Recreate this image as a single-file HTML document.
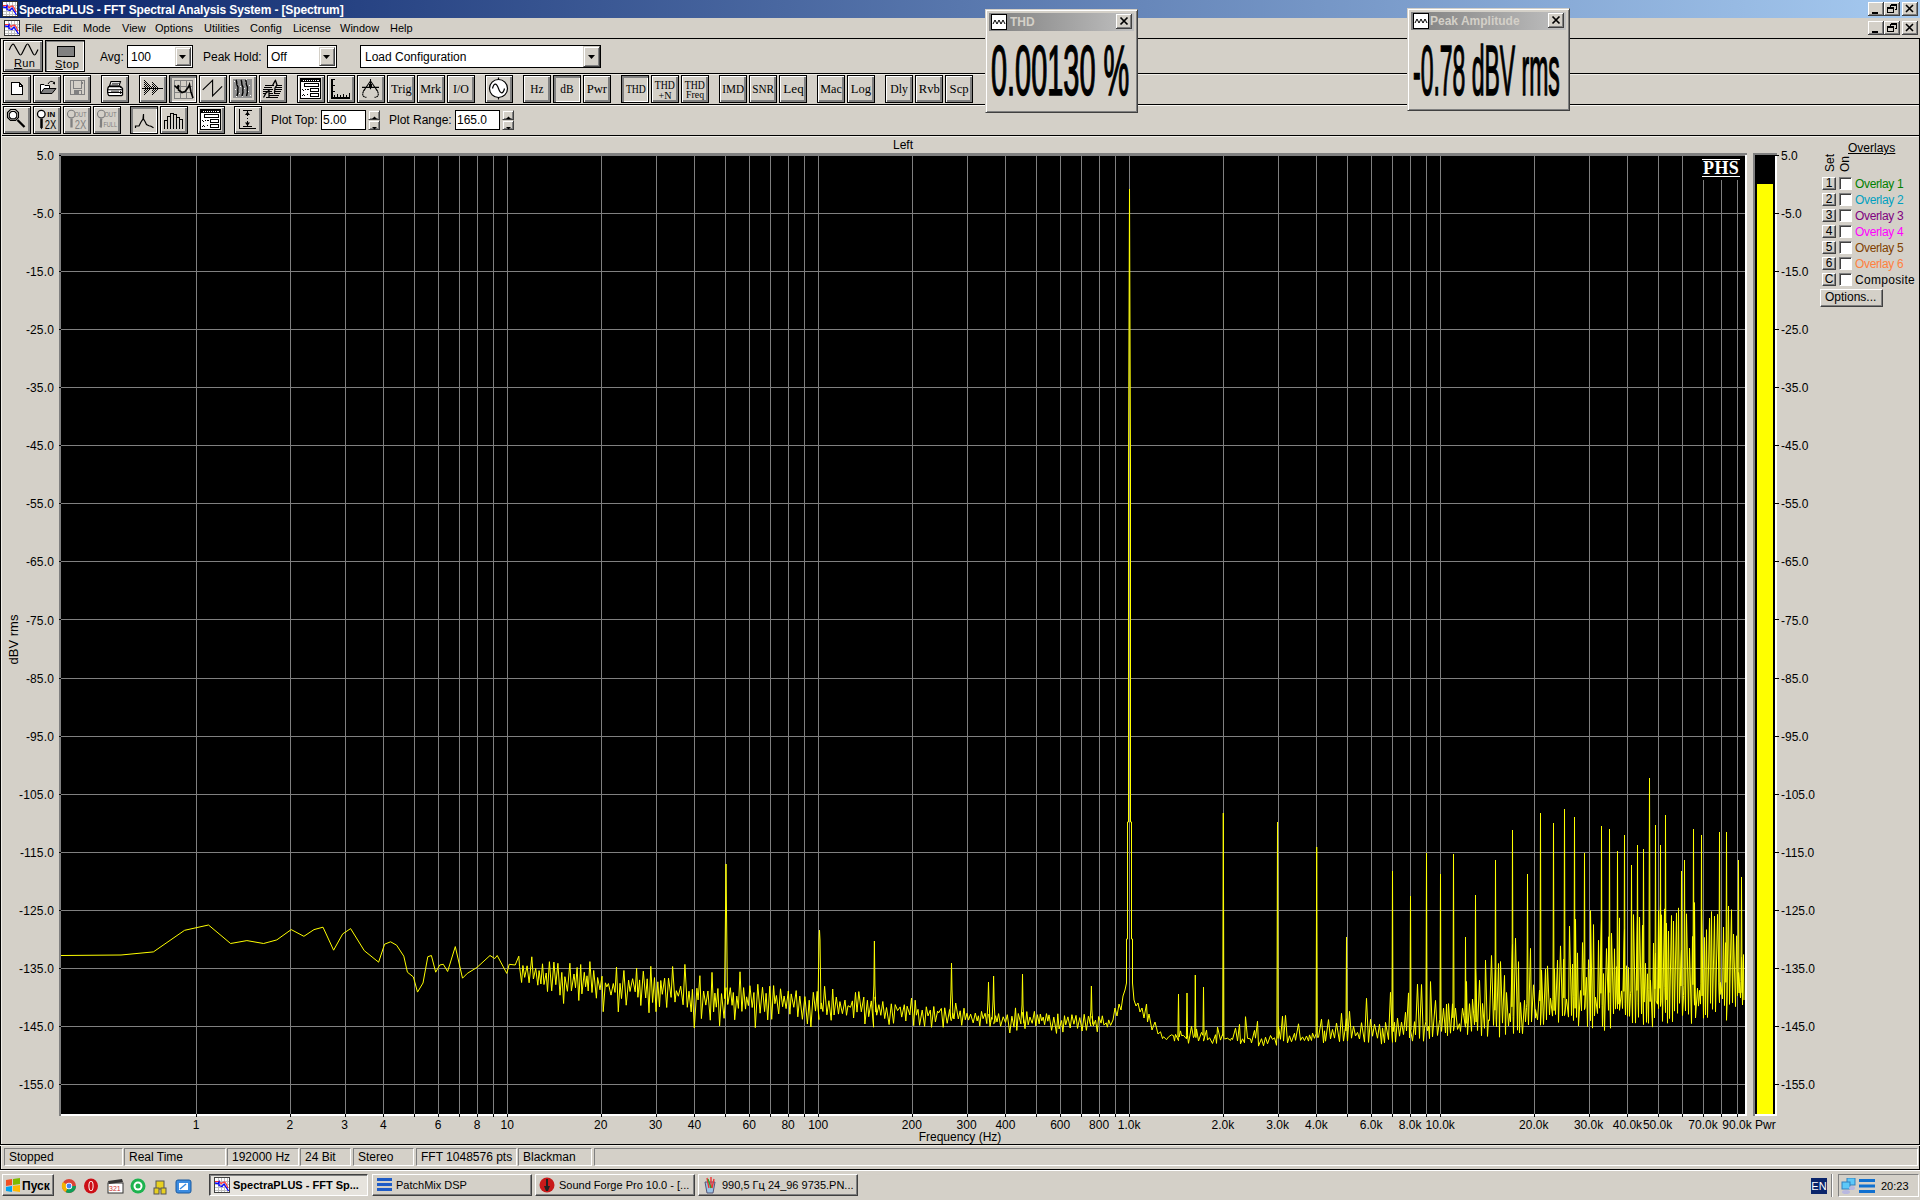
<!DOCTYPE html>
<html><head><meta charset="utf-8"><title>SpectraPLUS</title>
<style>
*{box-sizing:border-box}
html,body{margin:0;padding:0}
body{width:1920px;height:1200px;position:relative;overflow:hidden;background:#D4D0C8;font-family:"Liberation Sans",sans-serif;font-size:12px;color:#000}
.a{position:absolute}
.t{position:absolute;white-space:nowrap;line-height:1}
.tb{position:absolute;width:28px;height:28px;border:1px solid #000;background:#D4D0C8;box-shadow:inset 1px 1px 0 #fff,inset -2px -2px 0 #808080}
.tb.p{box-shadow:inset 2px 2px 0 #808080,inset -1px -1px 0 #fff}
.tb svg{position:absolute;left:0;top:0}
.st{font-family:"Liberation Serif",serif;font-size:13px;position:absolute;left:0;top:0;width:26px;height:26px;display:flex;align-items:center;justify-content:center;line-height:1}
.st span{display:inline-block;transform:scaleX(0.78)}
.hl{position:absolute;left:0;width:1920px;height:1px;background:#000}
.cap{position:absolute;width:16px;height:14px;background:#D4D0C8;box-shadow:inset -1px -1px 0 #404040,inset 1px 1px 0 #fff,inset -2px -2px 0 #808080}
.cap svg{position:absolute;left:0;top:0}
.sp{position:absolute;height:18px;border:1px solid;border-color:#808080 #fff #fff #808080;padding:1px 0 0 4px;font-size:12px;line-height:14px;white-space:nowrap;overflow:hidden}
.tk{position:absolute;top:1174px;height:22px;background:#D4D0C8;border:1px solid;border-color:#fff #404040 #404040 #fff;box-shadow:inset -1px -1px 0 #808080;font-size:11px;line-height:20px;white-space:nowrap;overflow:hidden}
.tk.p{border-color:#404040 #fff #fff #404040;box-shadow:inset 1px 1px 0 #808080;background:#E6E3DD}
.in{position:absolute;background:#fff;border:1px solid #000}
.arr{position:absolute;width:16px;background:#D4D0C8;border:1px solid;border-color:#D4D0C8 #404040 #404040 #D4D0C8;box-shadow:inset 1px 1px 0 #fff,inset -1px -1px 0 #808080}
.spn{position:absolute;width:12px;height:10px;background:#D4D0C8;border:1px solid;border-color:#D4D0C8 #404040 #404040 #D4D0C8;box-shadow:inset 1px 1px 0 #fff,inset -1px -1px 0 #808080}
.ov{position:absolute;left:1855px;font-size:12px;line-height:1;white-space:nowrap}
.sb{position:absolute;left:1822px;width:14px;height:13px;background:#D4D0C8;border:1px solid;border-color:#fff #404040 #404040 #fff;box-shadow:inset -1px -1px 0 #808080;font-size:12px;line-height:11px;text-align:center}
.cb{position:absolute;left:1839px;width:13px;height:13px;background:#fff;border:1px solid;border-color:#808080 #fff #fff #808080;box-shadow:inset 1px 1px 0 #404040}
</style></head><body>
<!-- title bar -->
<div class="a" style="left:0;top:0;width:1920px;height:18px;background:linear-gradient(to right,#0A246A 0%,#A6CAF0 100%)"></div>
<svg class="a" style="left:2px;top:1px" width="16" height="16" viewBox="0 0 16 16" shape-rendering="crispEdges">
<rect x="0" y="0" width="16" height="16" fill="#303030"/><rect x="1" y="1" width="14" height="14" fill="#fff"/>
<path d="M1 4h14M1 7h14M1 10h14M1 13h14M4 1v14M7 1v14M10 1v14M13 1v14" stroke="#c0c0c0" stroke-width="1"/>
<path d="M1 4.5L5 4.5L7 6.5L9 5.5L10.5 5L12 6.5L13 9L14 11" stroke="#ff3030" stroke-width="1.1" fill="none" shape-rendering="auto"/><path d="M1 6L4 6.5L5 5L5 8.5L8 9.5L10 7L12 10L14.5 14" stroke="#0000ff" stroke-width="1.3" fill="none" shape-rendering="auto"/>

</svg>
<div class="t" style="left:19px;top:4px;color:#fff;font-weight:bold;font-size:12px;letter-spacing:-0.13px">SpectraPLUS - FFT Spectral Analysis System - [Spectrum]</div>
<!-- caption buttons -->
<div class="cap" style="left:1868px;top:2px"><svg width="16" height="14"><rect x="4" y="10" width="6" height="2" fill="#000"/></svg></div>
<div class="cap" style="left:1884px;top:2px"><svg width="16" height="14" shape-rendering="crispEdges"><path d="M6.5 2.5h6v5h-2M6.5 3.5h6M6.5 2.5v2" stroke="#000" fill="none"/><rect x="3.5" y="5.5" width="6" height="5" stroke="#000" fill="none"/><path d="M3.5 6.5h6" stroke="#000"/></svg></div>
<div class="cap" style="left:1902px;top:2px"><svg width="16" height="14"><path d="M4 3L11 10M11 3L4 10" stroke="#000" stroke-width="1.6"/></svg></div>
<!-- menu bar -->
<svg class="a" style="left:4px;top:20px" width="16" height="16" viewBox="0 0 16 16" shape-rendering="crispEdges">
<rect x="0" y="0" width="16" height="16" fill="#303030"/><rect x="1" y="1" width="14" height="14" fill="#fff"/>
<path d="M1 4h14M1 7h14M1 10h14M1 13h14M4 1v14M7 1v14M10 1v14M13 1v14" stroke="#c0c0c0" stroke-width="1"/>
<path d="M1 4.5L5 4.5L7 6.5L9 5.5L10.5 5L12 6.5L13 9L14 11" stroke="#ff3030" stroke-width="1.1" fill="none" shape-rendering="auto"/><path d="M1 6L4 6.5L5 5L5 8.5L8 9.5L10 7L12 10L14.5 14" stroke="#0000ff" stroke-width="1.3" fill="none" shape-rendering="auto"/>

</svg>
<div class="t" style="left:25px;top:23px;font-size:11px">File</div>
<div class="t" style="left:53px;top:23px;font-size:11px">Edit</div>
<div class="t" style="left:83px;top:23px;font-size:11px">Mode</div>
<div class="t" style="left:122px;top:23px;font-size:11px">View</div>
<div class="t" style="left:155px;top:23px;font-size:11px">Options</div>
<div class="t" style="left:204px;top:23px;font-size:11px">Utilities</div>
<div class="t" style="left:250px;top:23px;font-size:11px">Config</div>
<div class="t" style="left:293px;top:23px;font-size:11px">License</div>
<div class="t" style="left:340px;top:23px;font-size:11px">Window</div>
<div class="t" style="left:390px;top:23px;font-size:11px">Help</div>
<!-- MDI caption buttons -->
<div class="cap" style="left:1868px;top:21px"><svg width="16" height="14"><rect x="4" y="10" width="6" height="2" fill="#000"/></svg></div>
<div class="cap" style="left:1884px;top:21px"><svg width="16" height="14" shape-rendering="crispEdges"><path d="M6.5 2.5h6v5h-2M6.5 3.5h6M6.5 2.5v2" stroke="#000" fill="none"/><rect x="3.5" y="5.5" width="6" height="5" stroke="#000" fill="none"/><path d="M3.5 6.5h6" stroke="#000"/></svg></div>
<div class="cap" style="left:1902px;top:21px"><svg width="16" height="14"><path d="M4 3L11 10M11 3L4 10" stroke="#000" stroke-width="1.6"/></svg></div>
<!-- toolbar frame lines -->
<div class="hl" style="top:38px"></div>
<div class="hl" style="top:73px"></div><div class="hl" style="top:74px;background:#F0EEE8"></div>
<div class="hl" style="top:104px"></div><div class="hl" style="top:105px;background:#F8F6F2"></div>
<div class="hl" style="top:135px"></div><div class="hl" style="top:136px;background:#F0EEE8"></div>
<div class="a" style="left:0;top:38px;width:1px;height:1132px;background:#000"></div>
<div class="a" style="left:1px;top:39px;width:1px;height:1130px;background:#F0EEE8"></div>
<div class="a" style="left:1919px;top:38px;width:1px;height:1132px;background:#000"></div>
<div class="a" style="left:3px;top:40px;width:40px;height:32px;border:1px solid #000;box-shadow:inset 1px 1px 0 #fff,inset -2px -2px 0 #808080"></div>
<svg class="a" style="left:0;top:40px" width="44" height="20"><path d="M9.2 10 Q12.5 1.5 14.5 5.5 L19 13.5 Q20.5 16.5 22 13.5 L26 5.5 Q27.5 2.5 29 5.5 L33 13.5 Q34.5 16.5 36 13.5 L38 9.5" fill="none" stroke="#000" stroke-width="1.2"/></svg>
<div class="t" style="left:14px;top:58px;font-size:11px;letter-spacing:0.3px"><u>R</u>un</div>
<div class="a" style="left:45px;top:40px;width:40px;height:32px;border:1px solid #000;box-shadow:inset 1px 1px 0 #808080,inset -1px -1px 0 #fff"></div>
<div class="a" style="left:57px;top:46px;width:18px;height:11px;background:#808080;border:1px solid #000"></div>
<div class="t" style="left:55px;top:59px;font-size:11px;letter-spacing:0.4px"><u>S</u>top</div>
<div class="t" style="left:100px;top:51px">Avg:</div>
<div class="in" style="left:127px;top:45px;width:66px;height:23px"></div>
<div class="t" style="left:131px;top:51px">100</div>
<div class="arr" style="left:175px;top:47px;height:19px"><svg width="14" height="17"><path d="M3 7h7l-3.5 4z" fill="#000"/></svg></div>
<div class="t" style="left:203px;top:51px">Peak Hold:</div>
<div class="in" style="left:267px;top:45px;width:70px;height:23px"></div>
<div class="t" style="left:271px;top:51px">Off</div>
<div class="arr" style="left:319px;top:47px;height:19px"><svg width="14" height="17"><path d="M3 7h7l-3.5 4z" fill="#000"/></svg></div>
<div class="in" style="left:360px;top:45px;width:241px;height:23px"></div>
<div class="t" style="left:365px;top:51px">Load Configuration</div>
<div class="arr" style="left:583px;top:46px;width:17px;height:21px"><svg width="15" height="19"><path d="M4 8h7l-3.5 4z" fill="#000"/></svg></div>
<div class="tb" style="left:3px;top:75px"><svg width="26" height="26" shape-rendering="crispEdges"><path d="M7.5 6.5h7.5l3.5 3.5v8.5h-11z" fill="#fff" stroke="#000"/><path d="M15 6.5v3.5h3.5" fill="none" stroke="#000"/></svg></div>
<div class="tb" style="left:33px;top:75px"><svg width="26" height="26"><path d="M6.5 17.5V8.5h3.5l1 1h4.5v3" fill="#fff" stroke="#000"/><path d="M6.5 17.5L10 12.5H22L18 17.5Z" fill="#808080" stroke="#000"/><path d="M14 8 Q16.5 3.5 20 6.5" fill="none" stroke="#000"/><path d="M18.5 7.5L21 8.5L21 5.5Z" fill="#000"/></svg></div>
<div class="tb" style="left:63px;top:75px"><svg width="26" height="26" shape-rendering="crispEdges"><path d="M6.5 4.5h13.5v14h-13.5z" fill="none" stroke="#808080"/><path d="M9.5 4.5v8h8v-8" fill="none" stroke="#808080"/><rect x="10" y="14" width="8" height="5" fill="#808080"/><rect x="15" y="15" width="2" height="3" fill="#D4D0C8"/><rect x="18" y="6" width="1" height="2" fill="#808080"/></svg></div>
<div class="tb" style="left:101px;top:75px"><svg width="26" height="26"><path d="M9 5.5h9.5l-1.5 4.5h-9.5z" fill="#fff" stroke="#000" stroke-width="1.1"/><path d="M10 7.3h7M9.5 8.8h6.5" stroke="#000" stroke-width="0.7"/><path d="M7.5 10.5h11l2 2v6.5l-1 0.7H7.5C5 19.7 5 10.5 7.5 10.5z" fill="#fff" stroke="#000" stroke-width="1.3"/><path d="M5.5 13.8h15M5.5 16.5h15" stroke="#000" stroke-width="1.1"/><path d="M9 15.2h8" stroke="#808080" stroke-width="1.6"/><path d="M18.5 11v9" stroke="#000" stroke-width="0.8" stroke-dasharray="1 1"/></svg></div>
<div class="tb" style="left:139px;top:75px"><svg width="26" height="26" shape-rendering="crispEdges"><defs><pattern id="dith" width="2" height="2" patternUnits="userSpaceOnUse"><rect width="1" height="1" fill="#000"/><rect x="1" y="1" width="1" height="1" fill="#000"/></pattern></defs><path d="M4 3.5L12 12L4 21Z" fill="url(#dith)"/><path d="M12 6L20 12L12 19Z" fill="url(#dith)"/><path d="M2 12.5H23" stroke="#000"/></svg></div>
<div class="tb p" style="left:169px;top:75px"><svg width="26" height="26" shape-rendering="crispEdges"><rect x="4.5" y="4.5" width="18" height="18" fill="none" stroke="#808080"/><path d="M4.5 10.5h18M4.5 16.5h18M10.5 4.5v18M16.5 4.5v18" stroke="#808080"/><path d="M4.5 9.5L7 12L8.5 9L8.5 14L12 16.5L15 15.5L18.5 11L19.5 8.5L21 16L23 22" fill="none" stroke="#000" stroke-width="1.6" shape-rendering="auto"/></svg></div>
<div class="tb" style="left:199px;top:75px"><svg width="26" height="26"><path d="M2.7 13.8L12.6 4.3V19.8L22.1 10.3" fill="none" stroke="#000" stroke-width="1.1"/></svg></div>
<div class="tb" style="left:229px;top:75px"><svg width="26" height="26" shape-rendering="crispEdges"><rect x="3" y="3" width="19" height="19" fill="#909090"/><path d="M4 5h1M7 8h1M11 4h1M15 6h1M19 9h1M5 13h1M9 17h1M14 12h1M18 15h1M6 20h1M12 20h1M20 19h1M16 3h1M10 10h1" stroke="#fff"/><path d="M6 4c1.5 2 0 4 1.5 6s-0.5 4 0.5 6l-1 4M11 4c1.5 2 0 4 1.5 6s-0.5 4 0.5 6l-1 4M15.5 4c1.5 2 0 4 1.5 6s-0.5 4 0.5 6l-1 4" fill="none" stroke="#000" stroke-width="1.4" shape-rendering="auto"/></svg></div>
<div class="tb" style="left:259px;top:75px"><svg width="26" height="26" shape-rendering="crispEdges"><path d="M5 9.5h8.5M16 9.5h6M4 11.5h7.5M15 11.5h7M3 13.5h9.5M14.5 13.5h7.5M3 15.5h4M9 15.5h2.5M14.5 15.5h6M3 17.5h3M9 17.5h3.5M13.5 17.5h6.5M9 19.5h10M6 21.5h12" stroke="#000"/><path d="M3.5 21.5L6 17L9 14.5V21.5M12.5 9.5L15 5L15.5 4.5L17 9L15 12L14.5 17" fill="none" stroke="#000" stroke-width="1.3" shape-rendering="auto"/></svg></div>
<div class="tb" style="left:297px;top:75px"><svg width="26" height="26" shape-rendering="crispEdges"><rect x="2.5" y="2.5" width="20" height="20" fill="#fff" stroke="#000"/><rect x="3" y="3" width="19" height="3" fill="#000"/><path d="M5 4.5h13" stroke="#fff" stroke-dasharray="1 1"/><rect x="19" y="4" width="2" height="1" fill="#fff"/><rect x="6.5" y="7.5" width="14" height="3" fill="none" stroke="#000" stroke-width="1"/><rect x="12.5" y="12.5" width="8" height="3" fill="none" stroke="#000"/><rect x="12.5" y="17.5" width="8" height="3" fill="none" stroke="#000"/><path d="M4 13h1M5 14h1M7 13.5h1M9 13h2M4 19h1M5 18h1M6 19h1M9 18.5h1" stroke="#000"/></svg></div>
<div class="tb" style="left:327px;top:75px"><svg width="26" height="26" shape-rendering="crispEdges"><path d="M3.5 3v18.5H22" fill="none" stroke="#000" stroke-width="2"/><path d="M3 3.5h4M3 6.5h2M3 9.5h4M3 12.5h2M3 15.5h4M3 18.5h2" stroke="#000"/><path d="M6.5 21v-2M9.5 21v-3M12.5 21v-2M15.5 21v-3M18.5 21v-2M21.5 21v-4" stroke="#000"/></svg></div>
<div class="tb" style="left:357px;top:75px"><svg width="26" height="26"><path d="M12.5 3V13.3M12.5 5L5.5 15M12.5 5L19.5 15M4 11.4H21" fill="none" stroke="#000" stroke-width="1.1"/><path d="M7 13C3.5 17 4 21.5 8.5 21.3M18 13C21.5 17 21 21.5 16.5 21.3" fill="none" stroke="#000" stroke-width="1.1" stroke-dasharray="2 0.5"/><path d="M11 8h3v3h-3z" fill="#000"/></svg></div>
<div class="tb" style="left:387px;top:75px"><div class="t" style="left:0;width:26px;text-align:center;top:6px;font-family:'Liberation Serif',serif;font-size:13.5px"><span style="display:inline-block;transform:scaleX(0.91)">Trig</span></div></div>
<div class="tb" style="left:417px;top:75px"><div class="t" style="left:0;width:26px;text-align:center;top:6px;font-family:'Liberation Serif',serif;font-size:13.5px"><span style="display:inline-block;transform:scaleX(0.9)">Mrk</span></div></div>
<div class="tb" style="left:447px;top:75px"><div class="t" style="left:0;width:26px;text-align:center;top:6px;font-family:'Liberation Serif',serif;font-size:13.5px"><span style="display:inline-block;transform:scaleX(0.88)">I/O</span></div></div>
<div class="tb" style="left:485px;top:75px"><svg width="26" height="26"><circle cx="12.5" cy="12.5" r="9" fill="#fff" stroke="#000" stroke-width="1.2"/><path d="M6.5 12.5C8 6.5 10.5 7 12.5 12.5S17 18.5 18.5 12.5" fill="none" stroke="#000" stroke-width="1.2"/><path d="M12.5 1.5v2.5M12.5 21v2.5" stroke="#000" stroke-width="1.2"/></svg></div>
<div class="tb" style="left:523px;top:75px"><div class="t" style="left:0;width:26px;text-align:center;top:6px;font-family:'Liberation Serif',serif;font-size:13.5px"><span style="display:inline-block;transform:scaleX(0.84)">Hz</span></div></div>
<div class="tb p" style="left:553px;top:75px"><div class="t" style="left:0;width:26px;text-align:center;top:6px;font-family:'Liberation Serif',serif;font-size:13.5px"><span style="display:inline-block;transform:scaleX(0.84)">dB</span></div></div>
<div class="tb" style="left:583px;top:75px"><div class="t" style="left:0;width:26px;text-align:center;top:6px;font-family:'Liberation Serif',serif;font-size:13.5px"><span style="display:inline-block;transform:scaleX(0.94)">Pwr</span></div></div>
<div class="tb p" style="left:621px;top:75px"><div class="t" style="left:0;width:26px;text-align:center;top:6px;font-family:'Liberation Serif',serif;font-size:13.5px"><span style="display:inline-block;transform:scaleX(0.72)">THD</span></div></div>
<div class="tb" style="left:651px;top:75px"><div class="t" style="left:0;width:26px;text-align:center;top:3px;font-family:'Liberation Serif',serif;font-size:12.5px"><span style="display:inline-block;transform:scaleX(0.78)">THD</span></div><div class="t" style="left:0;width:26px;text-align:center;top:14px;font-family:'Liberation Serif',serif;font-size:11px"><span style="display:inline-block;transform:scaleX(0.92)">+N</span></div></div>
<div class="tb" style="left:681px;top:75px"><div class="t" style="left:0;width:26px;text-align:center;top:3px;font-family:'Liberation Serif',serif;font-size:12.5px"><span style="display:inline-block;transform:scaleX(0.78)">THD</span></div><div class="t" style="left:0;width:26px;text-align:center;top:13px;font-family:'Liberation Serif',serif;font-size:11px"><span style="display:inline-block;transform:scaleX(0.89)">Freq</span></div></div>
<div class="tb" style="left:719px;top:75px"><div class="t" style="left:0;width:26px;text-align:center;top:6px;font-family:'Liberation Serif',serif;font-size:13.5px"><span style="display:inline-block;transform:scaleX(0.83)">IMD</span></div></div>
<div class="tb" style="left:749px;top:75px"><div class="t" style="left:0;width:26px;text-align:center;top:6px;font-family:'Liberation Serif',serif;font-size:13.5px"><span style="display:inline-block;transform:scaleX(0.83)">SNR</span></div></div>
<div class="tb" style="left:779px;top:75px"><div class="t" style="left:0;width:26px;text-align:center;top:6px;font-family:'Liberation Serif',serif;font-size:13.5px"><span style="display:inline-block;transform:scaleX(0.97)">Leq</span></div></div>
<div class="tb" style="left:817px;top:75px"><div class="t" style="left:0;width:26px;text-align:center;top:6px;font-family:'Liberation Serif',serif;font-size:13.5px"><span style="display:inline-block;transform:scaleX(0.9)">Mac</span></div></div>
<div class="tb" style="left:847px;top:75px"><div class="t" style="left:0;width:26px;text-align:center;top:6px;font-family:'Liberation Serif',serif;font-size:13.5px"><span style="display:inline-block;transform:scaleX(0.93)">Log</span></div></div>
<div class="tb" style="left:885px;top:75px"><div class="t" style="left:0;width:26px;text-align:center;top:6px;font-family:'Liberation Serif',serif;font-size:13.5px"><span style="display:inline-block;transform:scaleX(0.87)">Dly</span></div></div>
<div class="tb" style="left:915px;top:75px"><div class="t" style="left:0;width:26px;text-align:center;top:6px;font-family:'Liberation Serif',serif;font-size:13.5px"><span style="display:inline-block;transform:scaleX(0.93)">Rvb</span></div></div>
<div class="tb" style="left:945px;top:75px"><div class="t" style="left:0;width:26px;text-align:center;top:6px;font-family:'Liberation Serif',serif;font-size:13.5px"><span style="display:inline-block;transform:scaleX(0.94)">Scp</span></div></div>
<div class="tb" style="left:3px;top:106px"><svg width="26" height="26"><path d="M6.5 2.5h5l3 3v5l-3 3h-5l-3-3v-5z" fill="none" stroke="#000" stroke-width="1.1"/><path d="M7.3 4.5h3.4l2 2v3.4l-2 2H7.3l-2-2V6.5z" fill="#fff" stroke="#000" stroke-width="1.1"/><path d="M13.5 13L20.5 20" stroke="#000" stroke-width="2.3"/></svg></div>
<div class="tb" style="left:33px;top:106px"><svg width="26" height="26"><circle cx="7.3" cy="7.1" r="3.8" fill="#fff" stroke="#000" stroke-width="1.3"/><path d="M7.5 11.5V20.5" stroke="#000" stroke-width="2.5"/><path d="M6.2 20L7.5 22.5L8.8 20Z" fill="#000"/><text x="13.3" y="9.8" font-family="Liberation Sans" font-size="7" font-weight="bold" textLength="8" lengthAdjust="spacingAndGlyphs">IN</text><text x="10.8" y="22" font-family="Liberation Sans" font-size="12.5" textLength="11.5" lengthAdjust="spacingAndGlyphs">2X</text></svg></div>
<div class="tb" style="left:63px;top:106px"><svg width="26" height="26"><circle cx="7.3" cy="7.1" r="3.8" fill="none" stroke="#808080" stroke-width="1.1"/><path d="M7.5 11.5V20.5" stroke="#808080" stroke-width="2.3"/><text x="10.2" y="9.8" font-family="Liberation Sans" font-size="7" fill="#808080" textLength="12.5" lengthAdjust="spacingAndGlyphs">OUT</text><text x="10.8" y="22" font-family="Liberation Sans" font-size="12.5" fill="#808080" textLength="11.5" lengthAdjust="spacingAndGlyphs">2X</text></svg></div>
<div class="tb" style="left:93px;top:106px"><svg width="26" height="26"><circle cx="7.3" cy="7.1" r="3.8" fill="none" stroke="#808080" stroke-width="1.1"/><path d="M7.5 11.5C6 14 8 17 6.5 20.5" stroke="#808080" stroke-width="2.3" fill="none"/><text x="10.2" y="9.8" font-family="Liberation Sans" font-size="7" fill="#808080" textLength="12.5" lengthAdjust="spacingAndGlyphs">OUT</text><text x="9.5" y="19.5" font-family="Liberation Sans" font-size="7.5" fill="#808080" textLength="13.5" lengthAdjust="spacingAndGlyphs">FULL</text></svg></div>
<div class="tb p" style="left:130px;top:106px"><svg width="26" height="26"><path d="M4.5 21V19H8L10 15L12 12L12.5 7V12L14 14.5L15.5 17.5L18 18.7L20 19.3L22.5 20.7" fill="none" stroke="#000" stroke-width="1.2"/></svg></div>
<div class="tb" style="left:160px;top:106px"><svg width="26" height="26" shape-rendering="crispEdges"><path d="M3.5 22V13.5H6.5V9.5H9.5V6.5H12.5V7.5H15.5V10.5H18.5V12.5H21.5V22M6.5 22V13.5M9.5 22V9.5M12.5 22V7.5M15.5 22V10.5M18.5 22V12.5" fill="none" stroke="#000"/></svg></div>
<div class="tb" style="left:197px;top:106px"><svg width="26" height="26" shape-rendering="crispEdges"><rect x="2.5" y="2.5" width="20" height="20" fill="#fff" stroke="#000"/><rect x="3" y="3" width="19" height="3" fill="#000"/><path d="M5 4.5h13" stroke="#fff" stroke-dasharray="1 1"/><rect x="19" y="4" width="2" height="1" fill="#fff"/><rect x="6.5" y="7.5" width="14" height="3" fill="none" stroke="#000" stroke-width="1"/><rect x="12.5" y="12.5" width="8" height="3" fill="none" stroke="#000"/><rect x="12.5" y="17.5" width="8" height="3" fill="none" stroke="#000"/><path d="M4 13h1M5 14h1M7 13.5h1M9 13h2M4 19h1M5 18h1M6 19h1M9 18.5h1" stroke="#000"/></svg></div>
<div class="tb" style="left:234px;top:106px"><svg width="26" height="26" shape-rendering="crispEdges"><path d="M4.5 2V21.5H21" fill="none" stroke="#000"/><path d="M8 3.5H17M8 19.5H17M12.5 4V9M12.5 11V12M12.5 14V19" stroke="#000"/><path d="M10 8L12.5 4.5L15 8Z M10 15.5L12.5 19L15 15.5Z" fill="#000" shape-rendering="auto"/></svg></div>
<div class="t" style="left:271px;top:114px">Plot Top:</div>
<div class="in" style="left:321px;top:110px;width:45px;height:20px"></div>
<div class="t" style="left:323px;top:114px">5.00</div>
<div class="spn" style="left:368px;top:110px"><svg width="10" height="8"><path d="M3 5h5l-2.5-2.5z" fill="#000"/></svg></div><div class="spn" style="left:368px;top:120px"><svg width="10" height="8"><path d="M3 3h5l-2.5 2.5z" fill="#000"/></svg></div>
<div class="t" style="left:389px;top:114px">Plot Range:</div>
<div class="in" style="left:455px;top:110px;width:45px;height:20px"></div>
<div class="t" style="left:457px;top:114px">165.0</div>
<div class="spn" style="left:502px;top:110px"><svg width="10" height="8"><path d="M3 5h5l-2.5-2.5z" fill="#000"/></svg></div><div class="spn" style="left:502px;top:120px"><svg width="10" height="8"><path d="M3 3h5l-2.5 2.5z" fill="#000"/></svg></div>
<svg class="a" style="left:0;top:0" width="1920" height="1200" shape-rendering="crispEdges">
<rect x="61" y="155" width="1684" height="959" fill="#000"/>
<rect x="59" y="153" width="1688" height="2" fill="#808080"/>
<rect x="59" y="153" width="2" height="963" fill="#808080"/>
<rect x="61" y="1114" width="1686" height="2" fill="#fff"/>
<rect x="1745" y="155" width="2" height="961" fill="#fff"/>
<path d="M196.5 155V1114M290.5 155V1114M345.5 155V1114M383.5 155V1114M414.5 155V1114M438.5 155V1114M459.5 155V1114M477.5 155V1114M493.5 155V1114M507.5 155V1114M601.5 155V1114M656.5 155V1114M694.5 155V1114M725.5 155V1114M749.5 155V1114M770.5 155V1114M788.5 155V1114M804.5 155V1114M818.5 155V1114M912.5 155V1114M967.5 155V1114M1005.5 155V1114M1036.5 155V1114M1060.5 155V1114M1081.5 155V1114M1099.5 155V1114M1115.5 155V1114M1129.5 155V1114M1223.5 155V1114M1278.5 155V1114M1316.5 155V1114M1347.5 155V1114M1371.5 155V1114M1392.5 155V1114M1410.5 155V1114M1426.5 155V1114M1440.5 155V1114M1534.5 155V1114M1589.5 155V1114M1627.5 155V1114M1658.5 155V1114M1682.5 155V1114M1703.5 155V1114M1721.5 155V1114M1737.5 155V1114" stroke="#808080" stroke-width="1"/>
<path d="M61 155.5H1745M61 213.5H1745M61 271.5H1745M61 329.5H1745M61 387.5H1745M61 445.5H1745M61 503.5H1745M61 561.5H1745M61 619.5H1745M61 678.5H1745M61 736.5H1745M61 794.5H1745M61 852.5H1745M61 910.5H1745M61 968.5H1745M61 1026.5H1745M61 1084.5H1745" stroke="#808080" stroke-width="1"/>
<path d="M59 155.5H61M59 213.5H61M59 271.5H61M59 329.5H61M59 387.5H61M59 445.5H61M59 503.5H61M59 561.5H61M59 619.5H61M59 678.5H61M59 736.5H61M59 794.5H61M59 852.5H61M59 910.5H61M59 968.5H61M59 1026.5H61M59 1084.5H61" stroke="#000" stroke-width="1"/>
<path d="M196.5 1114V1117M290.5 1114V1117M345.5 1114V1117M383.5 1114V1117M414.5 1114V1117M438.5 1114V1117M459.5 1114V1117M477.5 1114V1117M493.5 1114V1117M507.5 1114V1117M601.5 1114V1117M656.5 1114V1117M694.5 1114V1117M725.5 1114V1117M749.5 1114V1117M770.5 1114V1117M788.5 1114V1117M804.5 1114V1117M818.5 1114V1117M912.5 1114V1117M967.5 1114V1117M1005.5 1114V1117M1036.5 1114V1117M1060.5 1114V1117M1081.5 1114V1117M1099.5 1114V1117M1115.5 1114V1117M1129.5 1114V1117M1223.5 1114V1117M1278.5 1114V1117M1316.5 1114V1117M1347.5 1114V1117M1371.5 1114V1117M1392.5 1114V1117M1410.5 1114V1117M1426.5 1114V1117M1440.5 1114V1117M1534.5 1114V1117M1589.5 1114V1117M1627.5 1114V1117M1658.5 1114V1117M1682.5 1114V1117M1703.5 1114V1117M1721.5 1114V1117M1737.5 1114V1117" stroke="#000" stroke-width="1"/>
<rect x="1755" y="155" width="20" height="959" fill="#000"/>
<rect x="1753" y="153" width="24" height="2" fill="#808080"/>
<rect x="1753" y="153" width="2" height="963" fill="#808080"/>
<rect x="1755" y="1114" width="22" height="2" fill="#fff"/>
<rect x="1775" y="155" width="2" height="961" fill="#fff"/>
<rect x="1757" y="184" width="16" height="930" fill="#ffff00"/>
<path d="M1775 155.5H1779M1775 213.5H1779M1775 271.5H1779M1775 329.5H1779M1775 387.5H1779M1775 445.5H1779M1775 503.5H1779M1775 561.5H1779M1775 619.5H1779M1775 678.5H1779M1775 736.5H1779M1775 794.5H1779M1775 852.5H1779M1775 910.5H1779M1775 968.5H1779M1775 1026.5H1779M1775 1084.5H1779" stroke="#000" stroke-width="1"/>
</svg>
<svg class="a" style="left:0;top:0" width="1920" height="1200"><clipPath id="pc"><rect x="61" y="155" width="1684" height="959"/></clipPath><path clip-path="url(#pc)" d="M61.0 955.5 121.0 955.0 153.4 951.9 184.6 930.3 208.5 925.0 230.6 943.5 246.9 940.6 263.6 943.5 276.8 939.9 291.2 929.6 303.9 936.3 314.0 929.6 323.0 927.2 333.6 950.2 342.7 933.9 350.6 928.6 364.3 950.7 378.6 962.2 384.6 944.2 390.6 941.8 396.6 945.2 403.8 956.2 407.4 972.2 413.4 977.0 417.5 992.1 423.0 983.0 427.8 956.7 431.4 955.5 435.7 972.2 439.7 965.0 443.3 964.3 447.6 971.5 455.3 946.6 462.5 978.2 467.3 973.4 476.9 967.5 490.0 955.5 494.8 958.6 497.2 955.5 506.8 973.4 509.2 964.3 515.2 965.0 518.8 956.2 519.5 966.4 521.6 982.5 522.9 965.5 524.7 977.4 527.1 965.8 529.1 982.8 531.8 956.8 533.4 979.0 535.7 968.4 537.8 985.2 539.1 970.6 540.9 984.0 542.5 963.8 544.0 984.5 546.2 973.0 547.5 991.6 549.4 961.7 551.7 990.9 553.9 962.1 555.8 984.7 557.9 963.3 560.0 995.2 561.8 972.4 563.6 1003.5 564.9 976.7 567.4 991.3 569.9 963.2 571.4 990.9 574.0 974.0 575.5 987.8 577.1 967.5 578.8 1000.5 580.7 964.5 581.9 993.9 584.3 972.3 585.6 986.8 587.0 975.8 588.2 991.0 589.9 961.6 592.0 992.5 593.7 970.5 596.4 998.2 597.6 977.5 600.0 989.8 602.0 976.2 603.2 1011.7 605.4 982.8 606.8 986.9 608.4 983.5 611.0 995.1 613.3 983.5 615.0 992.4 616.5 967.0 618.3 1011.9 620.0 983.3 621.5 998.6 623.9 970.5 626.2 1005.2 628.6 980.1 630.0 991.5 632.6 978.7 635.2 991.8 636.6 968.0 637.9 997.3 639.6 979.9 640.8 1005.5 643.3 971.2 645.7 998.0 647.2 978.8 649.0 1012.8 650.8 966.3 652.6 1002.5 654.5 977.6 656.0 1011.7 657.8 981.8 659.5 1006.9 660.8 980.5 662.3 994.3 664.6 978.2 666.7 1007.5 668.5 978.0 671.1 997.4 672.6 966.5 675.0 1002.1 676.3 990.7 678.4 996.2 680.7 986.2 683.1 1004.8 684.9 964.4 687.3 1007.3 689.0 991.2 691.2 1011.9 692.4 989.3 694.3 1027.9 696.9 988.2 698.1 999.9 699.9 975.7 701.4 1018.6 703.6 991.0 705.8 1005.1 707.9 991.0 710.3 1020.2 712.0 972.4 713.6 1011.9 714.9 993.1 716.3 1007.2 717.9 988.5 719.6 1025.8 721.5 993.6 724.1 1018.3 726.0 987.7 724.5 998.6 725.5 911.0 726.0 864.0 726.5 911.0 727.5 1004.3 727.9 1004.5 730.3 987.7 732.1 1005.3 733.3 992.5 734.7 1019.8 736.8 996.1 738.4 1008.4 740.0 971.8 741.9 1011.4 743.6 987.6 745.5 1009.1 746.6 996.8 748.4 1005.6 749.9 985.7 752.2 1007.5 753.9 992.5 755.3 1027.6 757.8 984.3 760.1 1013.2 762.5 987.2 764.6 1011.6 766.1 993.3 767.7 1019.9 769.8 986.2 771.7 1019.3 773.6 985.6 774.9 1003.7 776.4 995.5 778.7 1013.9 780.5 988.8 782.6 1006.7 784.1 996.0 786.1 1008.6 788.3 991.0 789.9 1014.2 791.2 993.9 793.8 1007.3 796.2 990.6 797.8 1016.8 799.8 996.1 802.4 1019.3 804.9 996.6 807.4 1024.0 809.2 1000.2 810.9 1027.0 813.3 992.3 815.5 1011.1 817.2 991.4 818.9 1019.6 818.0 1004.4 819.0 940.0 819.5 930.0 820.0 940.0 821.0 1009.1 821.3 1002.9 822.9 1011.5 824.6 986.3 826.9 1014.8 828.9 1000.7 831.2 1020.3 832.7 989.0 834.1 1015.0 836.3 997.0 838.5 1014.1 839.9 1001.6 842.4 1013.7 845.0 1000.1 846.5 1015.3 848.0 1005.7 850.5 1007.3 852.4 1000.9 853.6 1017.9 855.5 992.4 857.0 1012.1 858.8 991.6 861.3 1011.8 863.8 997.1 864.9 1024.0 867.4 1000.2 868.7 1016.7 871.3 1000.9 873.6 1027.2 872.9 1008.2 873.9 985.0 874.4 941.0 874.9 985.0 875.9 1012.1 875.1 996.9 876.7 1015.2 878.9 1004.7 880.8 1015.3 882.8 1001.5 884.7 1018.6 886.5 1007.5 889.1 1024.6 891.3 1003.8 893.5 1023.3 895.2 1004.6 897.6 1010.6 900.2 1006.9 901.7 1017.1 904.3 1004.7 905.8 1021.0 907.1 1006.2 909.8 1014.9 911.5 998.0 913.7 1025.6 915.2 1000.2 916.4 1015.2 918.0 1009.3 919.6 1025.3 922.2 1010.1 924.6 1026.4 926.3 1006.8 928.0 1015.9 930.3 1010.1 931.5 1027.3 933.8 1006.5 935.4 1021.9 937.6 1011.0 938.7 1012.9 941.3 1008.4 943.2 1027.3 944.7 1007.8 947.2 1023.3 949.6 1009.5 951.3 1020.7 950.0 1015.1 951.0 990.0 951.5 963.0 952.0 990.0 953.0 1018.4 952.5 1012.9 954.0 1019.0 955.7 1003.0 958.3 1018.9 960.2 1010.8 961.7 1025.3 964.0 1008.2 965.3 1019.8 967.0 1013.2 968.5 1020.1 970.6 1014.1 973.2 1022.9 975.3 1013.1 977.2 1021.0 978.4 1015.8 979.8 1025.9 981.5 1011.4 983.1 1018.7 985.1 1013.3 986.8 1023.6 987.0 1018.9 988.0 1000.0 988.5 982.0 989.0 1000.0 990.0 1021.9 988.9 1014.1 990.0 1026.4 991.6 1017.3 992.1 1019.4 993.1 1000.0 993.6 976.0 994.1 1000.0 995.1 1022.4 993.6 1023.7 995.6 1015.7 997.0 1021.9 998.6 1013.6 1000.6 1026.2 1003.2 1016.8 1005.5 1022.5 1007.3 1014.7 1009.8 1033.0 1011.9 1016.2 1014.0 1027.2 1015.5 1007.9 1016.8 1030.4 1018.3 1013.5 1020.9 1023.9 1021.0 1020.4 1022.0 1005.0 1022.5 974.0 1023.0 1005.0 1024.0 1023.3 1022.6 1012.3 1025.0 1028.7 1026.8 1011.6 1028.2 1024.8 1029.9 1017.0 1032.2 1023.3 1034.4 1011.4 1035.8 1025.9 1037.4 1014.7 1039.2 1023.9 1040.3 1014.1 1041.8 1020.9 1043.2 1017.0 1044.6 1024.7 1046.5 1013.6 1047.8 1021.2 1049.0 1014.9 1051.6 1030.3 1053.8 1017.1 1056.5 1033.4 1057.8 1013.8 1059.1 1028.9 1061.6 1020.5 1062.9 1032.1 1064.5 1015.7 1065.7 1024.8 1067.9 1016.9 1070.2 1028.0 1071.9 1014.7 1073.9 1024.2 1076.0 1015.4 1077.5 1028.4 1079.8 1017.6 1082.1 1031.0 1084.2 1014.3 1086.4 1030.3 1088.4 1016.2 1090.9 1026.0 1089.9 1021.7 1090.9 1010.0 1091.4 986.0 1091.9 1010.0 1092.9 1024.2 1092.1 1016.3 1093.4 1025.9 1095.5 1020.1 1097.3 1031.8 1098.7 1016.5 1101.1 1023.1 1102.3 1015.8 1104.0 1025.1 1106.2 1022.8 1107.4 1027.2 1108.7 1019.9 1110.6 1025.4 1113.0 1020.0 1115.0 1008.0 1117.0 1016.0 1119.0 1004.0 1121.0 1010.0 1123.0 996.0 1125.0 990.0 1126.5 983.0 1126.5 939.0 1127.5 939.0 1127.5 822.0 1128.5 822.0 1128.5 466.0 1129.5 189.0 1130.5 466.0 1130.5 822.0 1131.5 822.0 1131.5 939.0 1132.5 939.0 1132.5 983.0 1134.0 1000.0 1136.0 1006.0 1138.0 1003.0 1140.0 1012.0 1142.0 1008.0 1144.0 1018.0 1146.5 1004.0 1147.5 1022.0 1149.0 1014.0 1152.0 1030.0 1155.0 1022.0 1158.0 1034.0 1160.5 1031.8 1162.5 1038.6 1163.5 1036.7 1166.5 1039.7 1168.5 1036.9 1171.5 1034.8 1173.5 1035.7 1174.5 1041.1 1175.5 1034.4 1178.5 1040.7 1177.9 1035.0 1178.2 1015.0 1178.5 994.0 1178.8 1015.0 1179.1 1037.1 1180.5 1030.9 1181.5 1035.6 1183.5 1035.4 1186.5 1038.9 1186.4 1035.1 1186.7 1015.0 1187.0 993.0 1187.3 1015.0 1187.6 1037.4 1187.5 1035.5 1188.5 1043.3 1191.5 1026.3 1193.5 1037.7 1194.7 1035.2 1195.0 1010.0 1195.3 975.0 1195.6 1010.0 1195.9 1037.6 1196.5 1029.0 1198.5 1041.0 1201.5 1032.4 1202.9 1035.3 1203.2 1015.0 1203.5 987.0 1203.8 1015.0 1204.1 1037.8 1203.5 1041.1 1206.5 1030.2 1207.5 1040.1 1209.5 1037.7 1212.5 1043.5 1215.5 1034.7 1216.5 1043.4 1217.5 1027.0 1220.5 1040.1 1222.5 1034.5 1222.7 1035.6 1223.0 916.0 1223.3 813.0 1223.6 916.0 1223.9 1038.3 1224.5 1039.0 1227.5 1038.2 1230.5 1040.4 1231.5 1038.0 1232.5 1039.5 1235.5 1028.2 1237.5 1040.9 1239.5 1024.4 1240.5 1043.9 1242.5 1038.8 1244.5 1042.8 1245.5 1016.7 1247.5 1038.3 1250.5 1038.9 1251.5 1042.9 1254.5 1030.4 1255.5 1038.2 1257.5 1021.2 1258.5 1046.1 1261.5 1038.7 1263.5 1045.8 1265.5 1037.2 1267.5 1043.8 1270.5 1035.5 1272.5 1039.4 1274.5 1037.8 1276.5 1045.3 1276.9 1035.1 1277.2 935.0 1277.5 822.0 1277.8 935.0 1278.1 1038.4 1278.5 1026.3 1280.5 1039.3 1282.5 1016.1 1283.5 1041.1 1285.5 1015.4 1287.5 1042.9 1289.5 1035.8 1291.5 1041.8 1294.5 1033.3 1295.5 1040.3 1298.5 1023.8 1300.5 1040.4 1302.5 1036.9 1304.5 1040.6 1306.5 1036.0 1308.5 1041.1 1309.5 1034.9 1311.5 1040.5 1312.5 1033.1 1314.5 1038.3 1316.1 1033.7 1316.4 940.0 1316.7 847.0 1317.0 940.0 1317.3 1037.5 1317.5 1036.8 1318.5 1037.3 1321.5 1019.2 1323.5 1042.9 1324.5 1030.8 1325.5 1041.2 1328.5 1019.6 1330.5 1038.9 1332.5 1029.4 1334.5 1038.1 1336.5 1023.0 1339.5 1041.7 1341.5 1013.3 1343.5 1041.1 1346.5 1018.7 1345.9 1030.9 1346.2 990.0 1346.5 937.0 1346.8 990.0 1347.1 1035.4 1347.5 1041.0 1349.5 1011.3 1351.5 1038.2 1353.5 1026.2 1355.5 1036.0 1357.5 1032.4 1359.5 1039.0 1361.5 1022.7 1364.5 1042.1 1366.5 998.3 1368.5 1042.4 1370.5 1019.4 1372.5 1036.2 1374.5 1024.2 1377.5 1038.2 1379.5 1024.3 1381.5 1044.1 1382.5 1027.9 1384.5 1042.8 1385.5 1022.4 1388.5 1039.5 1390.5 992.3 1392.5 1042.3 1391.9 1026.2 1392.2 960.0 1392.5 871.0 1392.8 960.0 1393.1 1031.7 1394.5 1022.2 1395.5 1042.1 1397.5 1018.1 1399.5 1036.2 1401.5 1022.1 1403.5 1034.6 1405.5 1012.3 1406.5 1031.0 1408.5 992.9 1409.5 1037.9 1409.9 1023.7 1410.2 960.0 1410.5 896.0 1410.8 960.0 1411.1 1029.8 1410.5 1029.8 1412.5 1041.1 1414.5 1021.7 1415.5 1034.8 1417.5 984.2 1419.5 1038.4 1421.5 984.5 1423.5 1041.2 1424.5 1028.2 1425.9 1021.6 1426.2 950.0 1426.5 853.0 1426.8 950.0 1427.1 1028.1 1427.5 1030.7 1428.5 1026.0 1429.5 1038.6 1430.5 981.6 1432.5 1036.8 1435.5 1000.4 1437.5 1035.5 1439.5 1021.0 1439.9 1019.7 1440.2 960.0 1440.5 874.0 1440.8 960.0 1441.1 1026.6 1441.5 1031.4 1443.5 1008.2 1445.5 1033.0 1446.5 1004.1 1447.5 1035.7 1448.5 1003.6 1450.5 1033.2 1452.5 1003.8 1452.9 1017.8 1453.2 950.0 1453.5 854.0 1453.8 950.0 1454.1 1025.1 1453.5 1030.8 1455.5 1008.0 1457.5 1029.4 1459.5 1023.7 1460.5 1031.4 1462.5 1008.2 1465.5 1027.2 1464.9 1015.6 1465.2 990.0 1465.5 937.0 1465.8 990.0 1466.1 1023.4 1466.5 981.5 1467.5 1034.6 1469.5 1003.7 1471.5 1031.3 1472.5 999.0 1474.5 1024.9 1474.9 1013.8 1475.2 960.0 1475.5 895.0 1475.8 960.0 1476.1 1022.0 1475.5 969.2 1477.5 1030.5 1479.5 980.2 1481.5 1035.7 1482.5 1003.5 1484.5 1028.3 1485.5 960.1 1487.5 1036.4 1488.5 1019.9 1489.5 1020.5 1491.5 955.5 1493.5 1025.4 1495.5 969.9 1494.9 1010.2 1495.2 950.0 1495.5 860.0 1495.8 950.0 1496.1 1019.2 1496.5 1026.8 1498.5 963.5 1499.5 1037.2 1500.5 961.6 1502.5 1023.1 1504.5 975.4 1505.5 1034.5 1506.5 992.5 1508.5 1026.0 1509.5 1013.5 1510.5 1021.8 1512.5 944.5 1511.9 1006.8 1512.2 940.0 1512.5 830.0 1512.8 940.0 1513.1 1016.5 1513.5 1033.5 1515.5 938.2 1517.5 1030.2 1518.5 961.7 1519.5 1033.0 1520.5 1002.5 1522.5 1033.7 1524.5 1000.3 1525.5 1021.9 1526.5 1007.6 1526.9 1003.6 1527.2 950.0 1527.5 874.0 1527.8 950.0 1528.1 1014.1 1528.5 1025.0 1530.5 948.4 1531.5 1022.0 1533.5 984.8 1535.5 1018.1 1535.5 1009.6 1537.5 1019.8 1539.5 990.1 1539.9 1000.9 1540.2 930.0 1540.5 813.0 1540.8 930.0 1541.1 1011.9 1540.5 1025.2 1541.5 970.2 1543.5 1024.5 1545.5 969.1 1546.5 1019.8 1547.5 965.9 1549.5 1014.9 1550.5 998.2 1552.5 1016.1 1552.9 999.3 1553.2 935.0 1553.5 823.0 1553.8 935.0 1554.1 1010.6 1554.5 968.7 1555.5 1014.5 1557.5 960.0 1558.5 1022.4 1560.5 945.9 1562.5 1015.9 1563.5 959.3 1563.9 997.9 1564.2 920.0 1564.5 809.0 1564.8 920.0 1565.1 1009.4 1564.5 1015.6 1566.5 999.1 1568.5 1017.1 1569.5 926.1 1571.5 1015.5 1572.5 964.1 1573.5 1020.5 1573.9 996.6 1574.2 930.0 1574.5 817.0 1574.8 930.0 1575.1 1008.3 1575.5 919.1 1576.5 1017.4 1577.5 952.9 1578.5 1026.0 1580.5 990.5 1581.5 1010.9 1582.5 942.6 1583.9 995.4 1584.2 940.0 1584.5 853.0 1584.8 940.0 1585.1 1007.3 1584.5 1009.6 1586.5 977.3 1587.5 1026.6 1588.5 959.7 1590.5 1020.7 1590.5 910.6 1592.5 1028.1 1593.5 924.6 1594.5 1015.9 1595.5 997.1 1597.5 1013.5 1598.5 940.3 1599.5 1008.2 1601.5 920.7 1600.9 993.3 1601.2 930.0 1601.5 826.0 1601.8 930.0 1602.1 1005.5 1602.5 1026.6 1603.5 973.6 1604.5 1030.5 1606.5 948.6 1608.5 1010.3 1608.5 936.8 1608.9 992.6 1609.2 930.0 1609.5 829.0 1609.8 930.0 1610.1 1004.8 1610.5 1028.2 1611.5 933.2 1613.5 1013.8 1614.5 948.8 1615.5 1009.1 1616.5 966.7 1617.5 1008.7 1616.9 992.0 1617.2 940.0 1617.5 851.0 1617.8 940.0 1618.1 1004.2 1619.5 917.9 1619.5 1010.3 1621.5 990.9 1622.5 1008.5 1624.5 929.4 1623.9 991.4 1624.2 930.0 1624.5 835.0 1624.8 930.0 1625.1 1003.6 1625.5 1015.0 1626.5 965.8 1627.5 1016.2 1628.5 967.5 1629.5 1016.3 1630.5 993.6 1630.9 990.9 1631.2 940.0 1631.5 865.0 1631.8 940.0 1632.1 1003.1 1632.5 1022.9 1633.5 914.6 1635.5 1023.1 1637.5 916.1 1636.9 990.4 1637.2 935.0 1637.5 845.0 1637.8 935.0 1638.1 1002.6 1638.5 1017.3 1639.5 917.2 1641.5 1013.9 1642.5 925.2 1643.5 1024.6 1642.9 989.9 1643.2 935.0 1643.5 849.0 1643.8 935.0 1644.1 1002.1 1645.5 963.3 1646.5 1022.3 1647.5 973.8 1648.5 1023.3 1648.9 989.4 1649.2 880.0 1649.5 778.0 1649.8 880.0 1650.1 1001.6 1650.5 980.2 1652.5 1027.1 1653.5 943.1 1654.5 1017.8 1655.5 953.0 1654.9 988.8 1655.2 930.0 1655.5 825.0 1655.8 930.0 1656.1 1001.0 1657.5 1004.2 1658.5 910.5 1658.5 1008.6 1660.5 904.7 1659.9 988.3 1660.2 935.0 1660.5 845.0 1660.8 935.0 1661.1 1000.4 1660.5 1006.4 1661.5 914.8 1662.5 1021.4 1664.5 908.9 1665.5 1012.6 1664.9 987.7 1665.2 925.0 1665.5 815.0 1665.8 925.0 1666.1 999.9 1666.5 923.2 1667.5 1023.2 1668.5 931.0 1669.5 1018.5 1671.5 915.5 1672.5 1021.8 1673.5 921.0 1674.5 1011.1 1676.5 912.9 1677.5 1013.3 1678.5 907.9 1679.5 1003.3 1681.5 950.2 1680.9 986.0 1681.2 940.0 1681.5 871.0 1681.8 940.0 1682.1 998.1 1682.5 1015.5 1683.5 995.6 1683.9 985.7 1684.2 935.0 1684.5 860.0 1684.8 935.0 1685.1 997.7 1685.5 1011.0 1686.5 913.8 1688.5 1014.3 1689.5 948.1 1691.5 1023.5 1692.5 936.5 1692.9 984.7 1693.2 925.0 1693.5 829.0 1693.8 925.0 1694.1 996.7 1694.5 1005.2 1694.5 902.6 1695.5 1017.9 1697.5 988.0 1698.5 1006.1 1699.5 990.4 1700.5 1004.1 1700.9 983.9 1701.2 925.0 1701.5 835.0 1701.8 925.0 1702.1 995.9 1701.5 909.0 1703.5 1018.2 1704.5 937.5 1705.5 1015.0 1706.5 929.7 1707.5 1017.5 1709.5 918.1 1710.5 1003.3 1711.5 911.6 1712.5 1009.3 1714.5 916.2 1715.5 1011.9 1717.5 914.4 1719.5 1002.7 1718.9 982.8 1719.2 925.0 1719.5 832.0 1719.8 925.0 1720.1 994.5 1720.5 982.4 1722.5 999.0 1723.5 927.0 1724.5 1005.5 1725.5 942.7 1725.9 982.4 1726.2 925.0 1726.5 832.0 1726.8 925.0 1727.1 994.0 1726.5 1020.3 1728.5 906.0 1729.5 1004.4 1731.5 909.7 1732.5 1002.8 1733.5 934.0 1735.5 1006.6 1736.5 935.8 1737.5 995.9 1737.9 981.7 1738.2 935.0 1738.5 860.0 1738.8 935.0 1739.1 993.0 1738.5 972.5 1740.5 997.9 1740.9 981.5 1741.2 940.0 1741.5 877.0 1741.8 940.0 1742.1 992.8 1741.5 957.0 1742.5 1005.0 1743.5 954.6 1744.0 1000.0" fill="none" stroke="#ffff00" stroke-width="1"/></svg>
<div class="t" style="right:1866px;top:150px;letter-spacing:0.15px">5.0</div>
<div class="t" style="left:1781px;top:150px">5.0</div>
<div class="t" style="right:1866px;top:208px;letter-spacing:0.15px">-5.0</div>
<div class="t" style="left:1781px;top:208px">-5.0</div>
<div class="t" style="right:1866px;top:266px;letter-spacing:0.15px">-15.0</div>
<div class="t" style="left:1781px;top:266px">-15.0</div>
<div class="t" style="right:1866px;top:324px;letter-spacing:0.15px">-25.0</div>
<div class="t" style="left:1781px;top:324px">-25.0</div>
<div class="t" style="right:1866px;top:382px;letter-spacing:0.15px">-35.0</div>
<div class="t" style="left:1781px;top:382px">-35.0</div>
<div class="t" style="right:1866px;top:440px;letter-spacing:0.15px">-45.0</div>
<div class="t" style="left:1781px;top:440px">-45.0</div>
<div class="t" style="right:1866px;top:498px;letter-spacing:0.15px">-55.0</div>
<div class="t" style="left:1781px;top:498px">-55.0</div>
<div class="t" style="right:1866px;top:556px;letter-spacing:0.15px">-65.0</div>
<div class="t" style="left:1781px;top:556px">-65.0</div>
<div class="t" style="right:1866px;top:615px;letter-spacing:0.15px">-75.0</div>
<div class="t" style="left:1781px;top:615px">-75.0</div>
<div class="t" style="right:1866px;top:673px;letter-spacing:0.15px">-85.0</div>
<div class="t" style="left:1781px;top:673px">-85.0</div>
<div class="t" style="right:1866px;top:731px;letter-spacing:0.15px">-95.0</div>
<div class="t" style="left:1781px;top:731px">-95.0</div>
<div class="t" style="right:1866px;top:789px;letter-spacing:0.15px">-105.0</div>
<div class="t" style="left:1781px;top:789px">-105.0</div>
<div class="t" style="right:1866px;top:847px;letter-spacing:0.15px">-115.0</div>
<div class="t" style="left:1781px;top:847px">-115.0</div>
<div class="t" style="right:1866px;top:905px;letter-spacing:0.15px">-125.0</div>
<div class="t" style="left:1781px;top:905px">-125.0</div>
<div class="t" style="right:1866px;top:963px;letter-spacing:0.15px">-135.0</div>
<div class="t" style="left:1781px;top:963px">-135.0</div>
<div class="t" style="right:1866px;top:1021px;letter-spacing:0.15px">-145.0</div>
<div class="t" style="left:1781px;top:1021px">-145.0</div>
<div class="t" style="right:1866px;top:1079px;letter-spacing:0.15px">-155.0</div>
<div class="t" style="left:1781px;top:1079px">-155.0</div>
<div class="t" style="left:146.2px;width:100px;text-align:center;top:1119px">1</div>
<div class="t" style="left:239.8px;width:100px;text-align:center;top:1119px">2</div>
<div class="t" style="left:294.6px;width:100px;text-align:center;top:1119px">3</div>
<div class="t" style="left:333.4px;width:100px;text-align:center;top:1119px">4</div>
<div class="t" style="left:388.2px;width:100px;text-align:center;top:1119px">6</div>
<div class="t" style="left:427.1px;width:100px;text-align:center;top:1119px">8</div>
<div class="t" style="left:457.2px;width:100px;text-align:center;top:1119px">10</div>
<div class="t" style="left:550.8px;width:100px;text-align:center;top:1119px">20</div>
<div class="t" style="left:605.6px;width:100px;text-align:center;top:1119px">30</div>
<div class="t" style="left:644.4px;width:100px;text-align:center;top:1119px">40</div>
<div class="t" style="left:699.2px;width:100px;text-align:center;top:1119px">60</div>
<div class="t" style="left:738.1px;width:100px;text-align:center;top:1119px">80</div>
<div class="t" style="left:768.2px;width:100px;text-align:center;top:1119px">100</div>
<div class="t" style="left:861.8px;width:100px;text-align:center;top:1119px">200</div>
<div class="t" style="left:916.6px;width:100px;text-align:center;top:1119px">300</div>
<div class="t" style="left:955.4px;width:100px;text-align:center;top:1119px">400</div>
<div class="t" style="left:1010.2px;width:100px;text-align:center;top:1119px">600</div>
<div class="t" style="left:1049.1px;width:100px;text-align:center;top:1119px">800</div>
<div class="t" style="left:1079.2px;width:100px;text-align:center;top:1119px">1.0k</div>
<div class="t" style="left:1172.8px;width:100px;text-align:center;top:1119px">2.0k</div>
<div class="t" style="left:1227.6px;width:100px;text-align:center;top:1119px">3.0k</div>
<div class="t" style="left:1266.4px;width:100px;text-align:center;top:1119px">4.0k</div>
<div class="t" style="left:1321.2px;width:100px;text-align:center;top:1119px">6.0k</div>
<div class="t" style="left:1360.1px;width:100px;text-align:center;top:1119px">8.0k</div>
<div class="t" style="left:1390.2px;width:100px;text-align:center;top:1119px">10.0k</div>
<div class="t" style="left:1483.8px;width:100px;text-align:center;top:1119px">20.0k</div>
<div class="t" style="left:1538.6px;width:100px;text-align:center;top:1119px">30.0k</div>
<div class="t" style="left:1577.4px;width:100px;text-align:center;top:1119px">40.0k</div>
<div class="t" style="left:1607.6px;width:100px;text-align:center;top:1119px">50.0k</div>
<div class="t" style="left:1653.0px;width:100px;text-align:center;top:1119px">70.0k</div>
<div class="t" style="left:1687.0px;width:100px;text-align:center;top:1119px">90.0k</div>
<div class="t" style="left:1755px;top:1119px">Pwr</div>
<div class="t" style="left:910px;width:100px;text-align:center;top:1131px">Frequency (Hz)</div>
<div class="t" style="left:853px;width:100px;text-align:center;top:139px">Left</div>
<div class="t" style="left:-37px;top:633px;width:100px;text-align:center;transform:rotate(-90deg);font-size:13px">dBV rms</div>
<div class="t" style="left:1848px;top:142px;text-decoration:underline">Overlays</div>
<div class="t" style="left:1824px;top:172px;transform:rotate(-90deg);transform-origin:0 0">Set</div>
<div class="t" style="left:1839px;top:172px;transform:rotate(-90deg);transform-origin:0 0">On</div>
<div class="sb" style="top:177px">1</div>
<div class="cb" style="top:177px"></div>
<div class="ov" style="top:178px;color:#008000;letter-spacing:-0.35px">Overlay 1</div>
<div class="sb" style="top:193px">2</div>
<div class="cb" style="top:193px"></div>
<div class="ov" style="top:194px;color:#00A0C0;letter-spacing:-0.35px">Overlay 2</div>
<div class="sb" style="top:209px">3</div>
<div class="cb" style="top:209px"></div>
<div class="ov" style="top:210px;color:#800080;letter-spacing:-0.35px">Overlay 3</div>
<div class="sb" style="top:225px">4</div>
<div class="cb" style="top:225px"></div>
<div class="ov" style="top:226px;color:#FF00FF;letter-spacing:-0.35px">Overlay 4</div>
<div class="sb" style="top:241px">5</div>
<div class="cb" style="top:241px"></div>
<div class="ov" style="top:242px;color:#804000;letter-spacing:-0.35px">Overlay 5</div>
<div class="sb" style="top:257px">6</div>
<div class="cb" style="top:257px"></div>
<div class="ov" style="top:258px;color:#FF8040;letter-spacing:-0.35px">Overlay 6</div>
<div class="sb" style="top:273px">C</div>
<div class="cb" style="top:273px"></div>
<div class="ov" style="top:274px;color:#000;letter-spacing:0.3px">Composite</div>
<div class="a" style="left:1820px;top:289px;width:63px;height:18px;border:1px solid;border-color:#fff #404040 #404040 #fff;box-shadow:inset -1px -1px 0 #808080;font-size:12px;line-height:15px;padding-left:4px">Options...</div>
<div class="a" style="left:1700px;top:156px;width:42px;height:24px;background:#000"></div>
<div class="a" style="left:1702px;top:159px;width:38px;height:1px;background:#fff"></div>
<div class="a" style="left:1702px;top:176px;width:38px;height:1px;background:#fff"></div>
<div class="t" style="left:1703px;top:159px;font-family:'Liberation Serif',serif;font-weight:bold;font-size:18px;color:#fff;letter-spacing:0.4px">PHS</div>
<div class="a" style="left:985px;top:9px;width:153px;height:104px;background:#D4D0C8;border:1px solid;border-color:#D4D0C8 #404040 #404040 #D4D0C8;box-shadow:inset 1px 1px 0 #fff,inset -1px -1px 0 #808080"></div>
<div class="a" style="left:989px;top:13px;width:145px;height:18px;background:linear-gradient(to right,#808080,#C0C0C0)"></div>
<svg class="a" style="left:991px;top:14px" width="16" height="16" shape-rendering="crispEdges"><rect x="0.5" y="0.5" width="15" height="15" fill="#fff" stroke="#000"/><path d="M2 10l2-4l2 4l2-4l2 4l2-4l2 4" fill="none" stroke="#000" shape-rendering="auto"/></svg>
<div class="t" style="left:1010px;top:16px;font-weight:bold;color:#D4D0C8;font-size:12px">THD</div>
<div class="cap" style="left:1116px;top:14px;width:16px;height:15px"><svg width="16" height="15"><path d="M4.5 3.5L11.5 10.5M11.5 3.5L4.5 10.5" stroke="#000" stroke-width="1.7"/></svg></div>
<div class="t" style="left:991px;top:36px;font-size:70px;-webkit-text-stroke:1.6px #000;transform-origin:0 0;transform:scaleX(0.413)">0.00130 %</div>
<div class="a" style="left:1407px;top:8px;width:163px;height:103px;background:#D4D0C8;border:1px solid;border-color:#D4D0C8 #404040 #404040 #D4D0C8;box-shadow:inset 1px 1px 0 #fff,inset -1px -1px 0 #808080"></div>
<div class="a" style="left:1411px;top:12px;width:155px;height:18px;background:linear-gradient(to right,#808080,#C0C0C0)"></div>
<svg class="a" style="left:1413px;top:13px" width="16" height="16" shape-rendering="crispEdges"><rect x="0.5" y="0.5" width="15" height="15" fill="#fff" stroke="#000"/><path d="M2 10l2-4l2 4l2-4l2 4l2-4l2 4" fill="none" stroke="#000" shape-rendering="auto"/></svg>
<div class="t" style="left:1430px;top:15px;font-weight:bold;color:#D4D0C8;font-size:12px">Peak Amplitude</div>
<div class="cap" style="left:1548px;top:13px;width:16px;height:15px"><svg width="16" height="15"><path d="M4.5 3.5L11.5 10.5M11.5 3.5L4.5 10.5" stroke="#000" stroke-width="1.7"/></svg></div>
<div class="t" style="left:1413px;top:36px;font-size:70px;-webkit-text-stroke:1.6px #000;transform-origin:0 0;transform:scaleX(0.328)">-0.78 dBV rms</div>
<div class="hl" style="top:1144px"></div><div class="hl" style="top:1145px;background:#F0EEE8"></div>
<div class="sp" style="left:4px;top:1148px;width:119px">Stopped</div>
<div class="sp" style="left:124px;top:1148px;width:102px">Real Time</div>
<div class="sp" style="left:227px;top:1148px;width:72px">192000 Hz</div>
<div class="sp" style="left:300px;top:1148px;width:51px">24 Bit</div>
<div class="sp" style="left:353px;top:1148px;width:61px">Stereo</div>
<div class="sp" style="left:416px;top:1148px;width:101px">FFT 1048576 pts</div>
<div class="sp" style="left:518px;top:1148px;width:74px">Blackman</div>
<div class="sp" style="left:594px;top:1148px;width:1324px"></div>
<div class="hl" style="top:1169px"></div>
<div class="hl" style="top:1170px;background:#fff"></div>
<div class="a" style="left:2px;top:1174px;width:52px;height:22px;border:1px solid;border-color:#fff #404040 #404040 #fff;box-shadow:inset -1px -1px 0 #808080"></div>
<svg class="a" style="left:5px;top:1177px" width="16" height="16"><path d="M1 3l6-1v6l-6 1z" fill="#F25022"/><path d="M8 2l7-1v6l-7 1z" fill="#7FBA00"/><path d="M1 10l6-1v6l-6-1z" fill="#00A4EF"/><path d="M8 9l7-1v7l-7-1z" fill="#FFB900"/></svg>
<div class="t" style="left:22px;top:1180px;font-weight:bold;font-size:12px">Пуск</div>
<svg class="a" style="left:60px;top:1177px" width="140" height="18"><circle cx="9" cy="9" r="7" fill="#DB4437"/><path d="M9 9L16 9A7 7 0 0 1 5.5 15z" fill="#0F9D58"/><path d="M9 9L5.5 15A7 7 0 0 1 3 5z" fill="#F4B400"/><circle cx="9" cy="9" r="3.2" fill="#fff"/><circle cx="9" cy="9" r="2.4" fill="#4285F4"/><ellipse cx="31" cy="9" rx="7" ry="7.5" fill="#CC0F16"/><ellipse cx="31" cy="9" rx="2.6" ry="5" fill="#fff"/><ellipse cx="31" cy="9" rx="1.6" ry="4.2" fill="#CC0F16"/><rect x="48" y="6" width="15" height="10" fill="#fff" stroke="#333"/><path d="M48 4l14-2l1 3l-14 2z" fill="#333"/><text x="49" y="14" font-size="7" font-family="Liberation Sans" fill="#c33">321</text><circle cx="78" cy="9" r="7.5" fill="#1DB34F"/><circle cx="78" cy="9" r="4.5" fill="#fff"/><circle cx="78" cy="9" r="2.5" fill="#1DB34F"/><rect x="96" y="4" width="8" height="8" fill="#E8D020" stroke="#555"/><rect x="94" y="11" width="5" height="6" fill="#E8D020" stroke="#555"/><rect x="101" y="11" width="5" height="6" fill="#E8D020" stroke="#555"/><rect x="116" y="3" width="15" height="13" rx="2" fill="#3B8BE0" stroke="#1B5BA0"/><rect x="119" y="6" width="9" height="7" fill="#fff"/><path d="M120 12l6-5" stroke="#3B8BE0" stroke-width="1.5"/></svg>
<div class="tk p" style="left:209px;width:159px"><span style="position:absolute;left:23px;top:0;font-weight:bold">SpectraPLUS - FFT Sp...</span></div>
<div class="tk" style="left:372px;width:160px"><span style="position:absolute;left:23px;top:0;font-weight:normal">PatchMix DSP</span></div>
<div class="tk" style="left:535px;width:160px"><span style="position:absolute;left:23px;top:0;font-weight:normal">Sound Forge Pro 10.0 - [...</span></div>
<div class="tk" style="left:698px;width:160px"><span style="position:absolute;left:23px;top:0;font-weight:normal">990,5 Гц 24_96 9735.PN...</span></div>
<svg class="a" style="left:214px;top:1177px" width="16" height="16" shape-rendering="crispEdges"><rect x="0" y="0" width="16" height="16" fill="#404040"/><rect x="1" y="1" width="14" height="14" fill="#fff"/><path d="M1 4h14M1 7h14M1 10h14M1 13h14M4 1v14M7 1v14M10 1v14M13 1v14" stroke="#c0c0c0"/><path d="M1 4.5L5 4.5L7 6.5L9 5.5L10.5 5L12 6.5L13 9L14 11" stroke="#ff3030" stroke-width="1.1" fill="none" shape-rendering="auto"/><path d="M1 6L4 6.5L5 5L5 8.5L8 9.5L10 7L12 10L14.5 14" stroke="#0000ff" stroke-width="1.3" fill="none" shape-rendering="auto"/></svg>
<svg class="a" style="left:377px;top:1177px" width="16" height="16"><rect x="0" y="1" width="15" height="3" fill="#1E5BC6"/><rect x="0" y="6" width="15" height="3" fill="#1E5BC6"/><rect x="0" y="11" width="15" height="3" fill="#1E5BC6"/></svg>
<svg class="a" style="left:539px;top:1177px" width="16" height="16"><circle cx="8" cy="8" r="7.5" fill="#C81A1A"/><path d="M7 2h2v7h2l-2 5h-2l-2-5h2z" fill="#222"/></svg>
<svg class="a" style="left:702px;top:1176px" width="16" height="18"><path d="M3 6h10l-2 11H5z" fill="#9BC3E6" stroke="#557"/><path d="M5 2l2 10M9 1v11M12 3l-2 9" stroke="#E33" stroke-width="1.4"/><path d="M6 3l3 9" stroke="#2A2" stroke-width="1.2"/></svg>
<div class="a" style="left:1811px;top:1178px;width:16px;height:16px;background:#0A246A;color:#fff;font-size:11px;line-height:16px;text-align:center">EN</div>
<div class="a" style="left:1831px;top:1174px;width:1px;height:23px;background:#808080"></div><div class="a" style="left:1832px;top:1174px;width:1px;height:23px;background:#fff"></div>
<div class="a" style="left:1838px;top:1174px;width:81px;height:23px;border:1px solid;border-color:#808080 #fff #fff #808080"></div>
<svg class="a" style="left:1841px;top:1178px" width="34" height="16"><rect x="6" y="0" width="8" height="7" fill="#5CC8F8" stroke="#3080C0"/><rect x="1" y="4" width="8" height="7" fill="#5CC8F8" stroke="#3080C0"/><ellipse cx="5" cy="14" rx="4" ry="2" fill="#B8B8E0"/><ellipse cx="11" cy="10" rx="3" ry="2" fill="#B8B8E0"/><rect x="18" y="1" width="16" height="3" fill="#1070D0"/><rect x="18" y="6.5" width="16" height="3" fill="#1070D0"/><rect x="18" y="12" width="16" height="3" fill="#1070D0"/></svg>
<div class="t" style="left:1881px;top:1181px;font-size:11px">20:23</div>
</body></html>
